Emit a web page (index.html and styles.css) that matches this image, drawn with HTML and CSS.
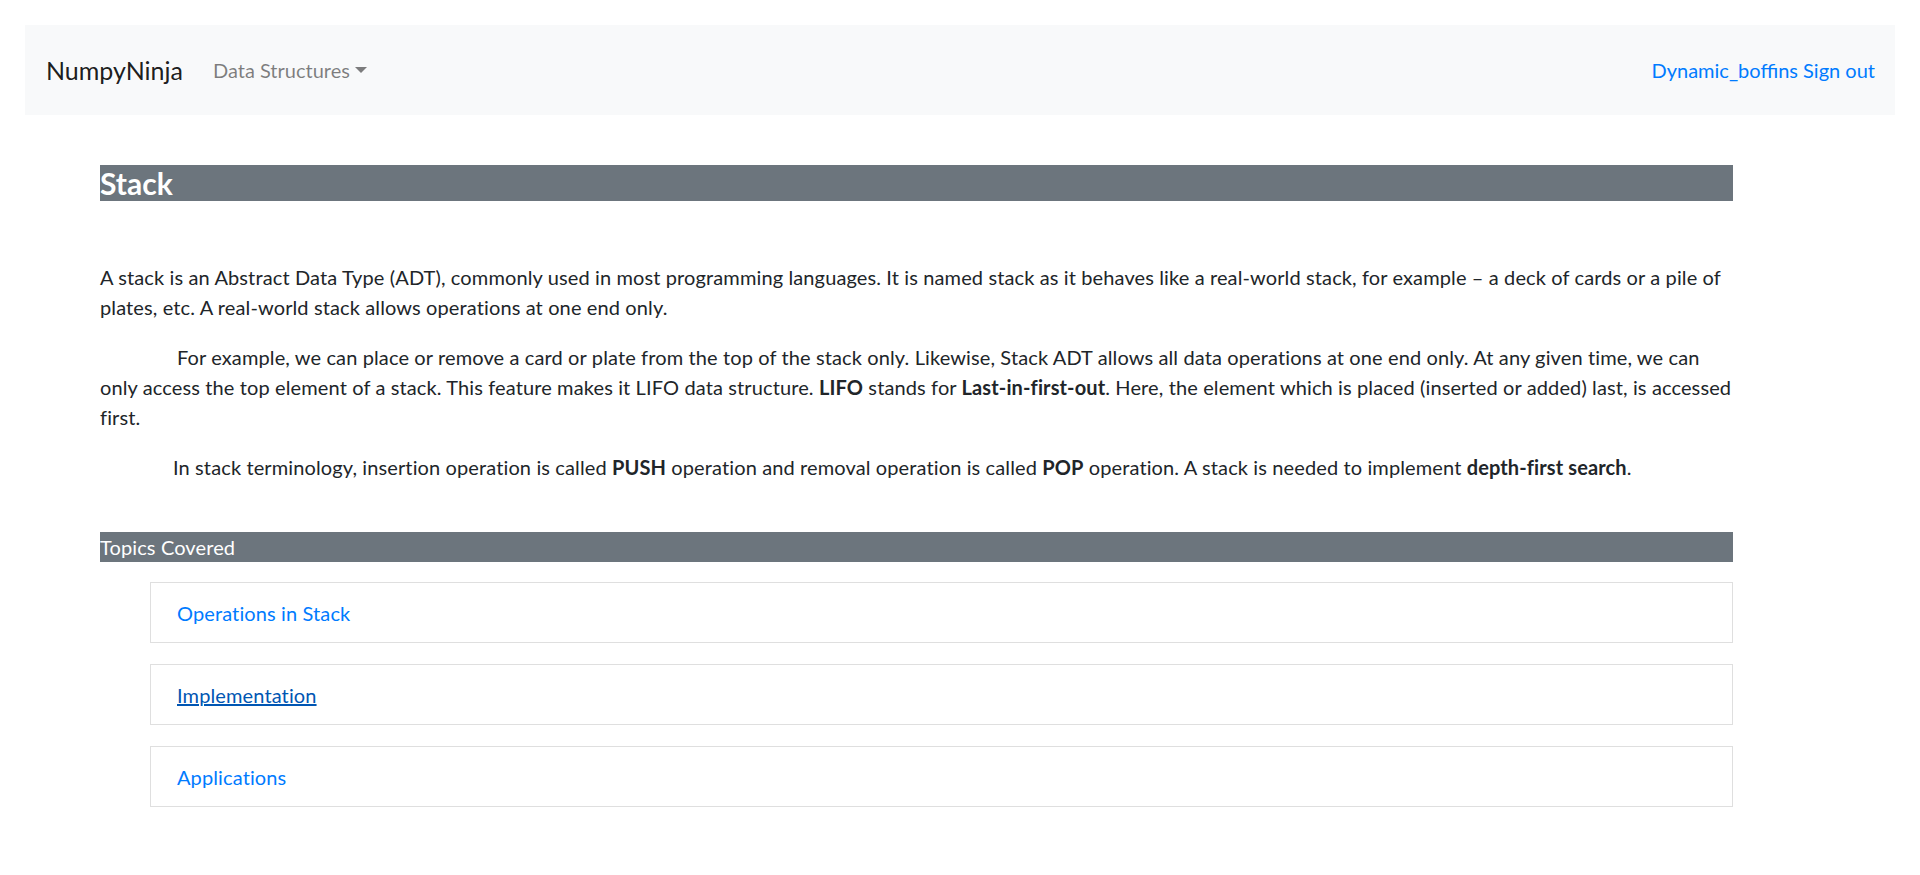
FILE: index.html
```html
<!DOCTYPE html>
<html lang="en">
<head>
<meta charset="utf-8">
<title>Stack</title>
<link rel="stylesheet" href="styles.css">
</head>
<body>
<nav class="navbar">
  <a class="brand" href="#">NumpyNinja</a>
  <a class="nav-link dropdown-toggle" href="#">Data Structures</a>
  <div class="nav-right">
    <a href="#">Dynamic_boffins</a> <a href="#">Sign out</a>
  </div>
</nav>
<main class="content">
  <h4 class="bar title-bar">Stack</h4>
  <section class="intro">
    <p>A stack is an Abstract Data Type (ADT), commonly used in most programming languages. It is named stack as it behaves like a real-world stack, for example – a deck of cards or a pile of plates, etc. A real-world stack allows operations at one end only.</p>
    <p class="indent-a">For example, we can place or remove a card or plate from the top of the stack only. Likewise, Stack ADT allows all data operations at one end only. At any given time, we can only&nbsp;access the top element of a stack. This feature makes it LIFO data structure. <b>LIFO</b> stands for <b>Last-in-first-out</b>. Here, the element which is placed (inserted or added) last, is accessed first.</p>
    <p class="indent-b">In stack terminology, insertion operation is called <b>PUSH</b> operation and removal operation is called <b>POP</b> operation. A stack is needed to implement <b>depth-first search</b>.</p>
  </section>
  <div class="bar topics-bar">Topics Covered</div>
  <ul class="topic-list">
    <li class="topic-card"><a href="#">Operations in Stack</a></li>
    <li class="topic-card"><a href="#" class="hover">Implementation</a></li>
    <li class="topic-card"><a href="#">Applications</a></li>
  </ul>
</main>
</body>
</html>
```
FILE: styles.css
```css
html, body {
  margin: 0;
  padding: 0;
  background: #fff;
}
body {
  font-family: "Segoe UI", Lato, "Liberation Sans", sans-serif;
  font-size: 20px;
  line-height: 30px;
  color: #212529;
}
a {
  text-decoration: none;
  color: #007bff;
}
.navbar {
  margin: 25px 25px 0 25px;
  height: 90px;
  box-sizing: border-box;
  padding: 0 20px 0 21px;
  background: #f8f9fa;
  display: flex;
  align-items: center;
}
.brand {
  font-size: 25px;
  line-height: 37px;
  color: rgba(0, 0, 0, 0.9);
  margin-right: 20px;
}
.nav-link {
  padding: 0 10px;
  color: rgba(0, 0, 0, 0.5);
  font-size: 20px;
}
.dropdown-toggle::after {
  content: "";
  display: inline-block;
  margin-left: 5px;
  vertical-align: 5px;
  border-top: 6px solid;
  border-right: 6px solid transparent;
  border-left: 6px solid transparent;
  border-bottom: 0;
}
.nav-right {
  margin-left: auto;
  color: #007bff;
}
.content {
  margin: 50px 187px 0 100px;
  letter-spacing: 0.12px;
}
.bar {
  background: #6c757d;
  color: #fff;
  margin: 0;
}
.title-bar {
  font-size: 30px;
  line-height: 36px;
  font-weight: 700;
  letter-spacing: 0;
}
.intro {
  margin-top: 61px;
}
.intro p {
  margin: 0 0 20px;
}
.indent-a {
  text-indent: 77px;
}
.indent-b {
  text-indent: 73px;
}
.topics-bar {
  margin-top: 50px;
  line-height: 30px;
}
.topic-list {
  list-style: none;
  margin: 20px 0 0 50px;
  padding: 0;
}
.topic-card {
  border: 1px solid #dfdfdf;
  padding: 14.5px 25px 14.5px 26px;
  margin-bottom: 21px;
}
.topic-card a.hover {
  color: #0056b3;
  text-decoration: underline;
}
```
